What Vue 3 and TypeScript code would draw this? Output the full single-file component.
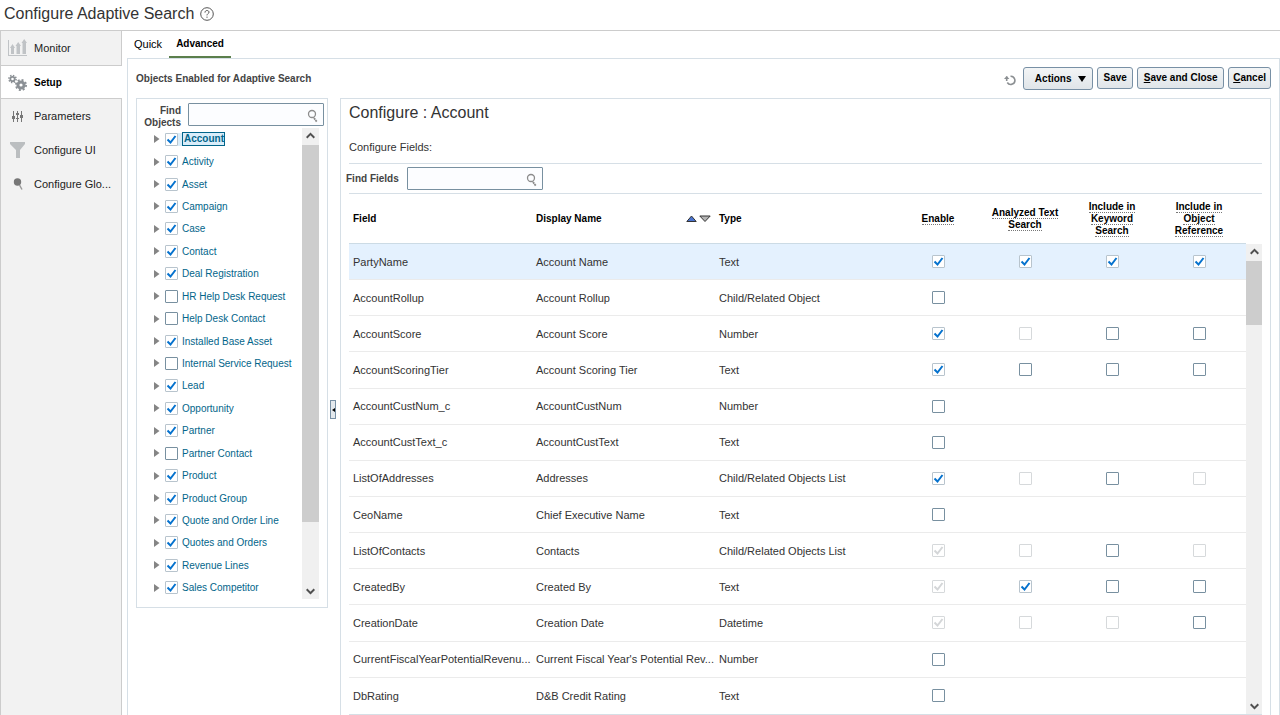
<script setup lang="ts">
type Mark = 'on' | 'off' | 'dis' | 'dison' | ''

interface Row {
  field: string
  display: string
  type: string
  marks: Mark[]
}

const nav = ['Monitor', 'Setup', 'Parameters', 'Configure UI', 'Configure Glo...']

const unchecked = ['HR Help Desk Request', 'Help Desk Contact', 'Internal Service Request', 'Partner Contact']
const objects = [
  'Account', 'Activity', 'Asset', 'Campaign', 'Case', 'Contact', 'Deal Registration',
  'HR Help Desk Request', 'Help Desk Contact', 'Installed Base Asset', 'Internal Service Request',
  'Lead', 'Opportunity', 'Partner', 'Partner Contact', 'Product', 'Product Group',
  'Quote and Order Line', 'Quotes and Orders', 'Revenue Lines', 'Sales Competitor',
].map((name) => ({ name, checked: !unchecked.includes(name) }))

const markHeads = [
  { name: 'Enable', lines: ['Enable'] },
  { name: 'Analyzed Text Search', lines: ['Analyzed Text', 'Search'] },
  { name: 'Include in Keyword Search', lines: ['Include in', 'Keyword', 'Search'] },
  { name: 'Include in Object Reference', lines: ['Include in', 'Object', 'Reference'] },
]

const rows: Row[] = [
  { field: 'PartyName', display: 'Account Name', type: 'Text', marks: ['on', 'on', 'on', 'on'] },
  { field: 'AccountRollup', display: 'Account Rollup', type: 'Child/Related Object', marks: ['off', '', '', ''] },
  { field: 'AccountScore', display: 'Account Score', type: 'Number', marks: ['on', 'dis', 'off', 'off'] },
  { field: 'AccountScoringTier', display: 'Account Scoring Tier', type: 'Text', marks: ['on', 'off', 'off', 'off'] },
  { field: 'AccountCustNum_c', display: 'AccountCustNum', type: 'Number', marks: ['off', '', '', ''] },
  { field: 'AccountCustText_c', display: 'AccountCustText', type: 'Text', marks: ['off', '', '', ''] },
  { field: 'ListOfAddresses', display: 'Addresses', type: 'Child/Related Objects List', marks: ['on', 'dis', 'off', 'dis'] },
  { field: 'CeoName', display: 'Chief Executive Name', type: 'Text', marks: ['off', '', '', ''] },
  { field: 'ListOfContacts', display: 'Contacts', type: 'Child/Related Objects List', marks: ['dison', 'dis', 'off', 'dis'] },
  { field: 'CreatedBy', display: 'Created By', type: 'Text', marks: ['dison', 'on', 'off', 'off'] },
  { field: 'CreationDate', display: 'Creation Date', type: 'Datetime', marks: ['dison', 'dis', 'dis', 'off'] },
  { field: 'CurrentFiscalYearPotentialRevenu...', display: "Current Fiscal Year's Potential Rev...", type: 'Number', marks: ['off', '', '', ''] },
  { field: 'DbRating', display: 'D&B Credit Rating', type: 'Text', marks: ['off', '', '', ''] },
]
</script>

<template>
  <div class="page">
    <header class="top">
      <h1>Configure Adaptive Search</h1>
      <button class="bare" aria-label="Help">
        <svg width="14" height="14" viewBox="0 0 14 14" fill="none" stroke="#555">
          <circle cx="7" cy="7" r="6.3" />
          <path d="M5 5.6C5 4.2 5.900 3.500 7 3.500S9 4.200 9 5.200C9 6.500 7 6.600 7 8.400M7 9.600v1.200" />
        </svg>
      </button>
    </header>
    <div class="body">
      <nav class="side">
        <a v-for="(item, i) in nav" :key="item" href="#" :class="{ current: i === 1 }">
          <svg width="20" height="18" viewBox="0 0 20 18">
            <g v-if="i === 0" fill="#c0c3c6">
              <path d="M0 1h1v15h18v1H0z" />
              <path d="M3 15V9H2l2.500-4L7 9H6v6zM8.500 15V7H7.500l2.700-4L13 7h-1v8zM14.500 15V4h-1l2.700-4L19 4h-1v11z" />
            </g>
            <g v-else-if="i === 1" fill="none" stroke="#8b9095">
              <circle cx="4.500" cy="5" r="2.200" stroke-width="1.800" />
              <circle cx="4.500" cy="5" r="3.600" stroke-width="1.500" stroke-dasharray="1.410 1.410" />
              <circle cx="13" cy="11" r="3.100" stroke-width="3" />
              <circle cx="13" cy="11" r="5.100" stroke-width="1.800" stroke-dasharray="2 2" />
            </g>
            <g v-else-if="i === 2" fill="#777">
              <path d="M5 4h1v11H5zM9 4h1v11H9zM13 4h1v11h-1z" />
              <path d="M4 9h3v3H4zM8 6h3v2H8zM8 11h3v1H8zM12 8h3v3h-3z" />
            </g>
            <path v-else-if="i === 3" d="M2 1h15v2l-5 6v8H8V9L2 3z" fill="#bbbec0" />
            <g v-else>
              <circle cx="9.500" cy="7" r="3.700" fill="#777" />
              <path d="M11.500 10l2.500 4.500" stroke="#999" stroke-width="1.500" />
            </g>
          </svg>
          <span>{{ item }}</span>
        </a>
      </nav>
      <main>
        <div class="tabs">
          <a href="#">Quick</a>
          <a href="#" class="active">Advanced</a>
        </div>
        <section class="panel">
          <div class="bar">
            <h2>Objects Enabled for Adaptive Search</h2>
            <button class="bare refresh" aria-label="Refresh">
              <svg width="14" height="12" viewBox="0 0 14 12" fill="none" stroke="#8b8f92" stroke-width="1.600">
                <path d="M7.500 2.200A4.100 4.100 0 1 1 4.300 8.500M3.700 7V2.500" />
                <path d="M1 5l2.700-3L6.400 5z" fill="#8b8f92" stroke="none" />
              </svg>
            </button>
            <button class="btn menu">Actions
              <svg width="8" height="6" viewBox="0 0 8 6"><path d="M0 0h8L4 6z" /></svg>
            </button>
            <button class="btn save">Save</button>
            <button class="btn close"><span><u>S</u>ave and Close</span></button>
            <button class="btn"><span><u>C</u>ancel</span></button>
          </div>
          <div class="split">
            <section class="objects">
              <div class="find">
                <label for="find-objects">Find Objects</label>
                <div class="search">
                  <input id="find-objects" type="text">
                  <svg width="12" height="14" viewBox="0 0 12 14" fill="none" stroke="#8c8c8c">
                    <circle cx="5" cy="5" r="3.500" stroke-width="1.300" />
                    <path d="M7 9l3 4" stroke-width="1.800" stroke-dasharray="2 .5" />
                  </svg>
                </div>
              </div>
              <div class="scroller">
                <ul>
                  <li v-for="(o, i) in objects" :key="o.name" :class="{ selected: i === 0 }">
                    <button class="bare" :aria-label="'Expand ' + o.name">
                      <svg width="6" height="8" viewBox="0 0 6 8"><path d="M0 0l5.500 4L0 8z" fill="#858585" /></svg>
                    </button>
                    <span class="node">
                      <input type="checkbox" :checked="o.checked" :aria-label="o.name">
                      <a href="#">{{ o.name }}</a>
                    </span>
                  </li>
                </ul>
                <div class="scrollbar">
                  <svg width="9" height="7" viewBox="0 0 9 7"><path d="M.7 5.700L4.500 1.900l3.800 3.800" /></svg>
                  <div class="thumb tree-thumb"></div>
                  <svg width="9" height="7" viewBox="0 0 9 7"><path d="M.7 1.300L4.500 5.100l3.800-3.800" /></svg>
                </div>
              </div>
            </section>
            <div class="divider">
              <button aria-label="Collapse pane">
                <svg width="3" height="4" viewBox="0 0 3 4"><path d="M3 0v4L0 2z" /></svg>
              </button>
            </div>
            <section class="config">
              <h3>Configure : Account</h3>
              <p>Configure Fields:</p>
              <div class="filter">
                <label for="find-fields">Find Fields</label>
                <div class="search">
                  <input id="find-fields" type="text">
                  <svg width="12" height="14" viewBox="0 0 12 14" fill="none" stroke="#8c8c8c">
                    <circle cx="5" cy="5" r="3.500" stroke-width="1.300" />
                    <path d="M7 9l3 4" stroke-width="1.800" stroke-dasharray="2 .5" />
                  </svg>
                </div>
              </div>
              <div class="grid">
                <table>
                  <colgroup>
                    <col class="c-text"><col class="c-text"><col>
                    <col v-for="h in markHeads" :key="h.name" class="c-mark">
                  </colgroup>
                  <thead>
                    <tr>
                      <th>Field</th>
                      <th>
                        <div class="sorted">Display Name
                          <svg width="25" height="8" viewBox="0 0 25 8" stroke="#333" stroke-linejoin="round">
                            <path d="M.8 6.500L5.500 1l4.700 5.500z" fill="#4a74d0" />
                            <path d="M13.800 1h10.400L19 6.500z" fill="#b5b5b5" />
                          </svg>
                        </div>
                      </th>
                      <th>Type</th>
                      <th v-for="h in markHeads" :key="h.name" class="mark">
                        <span v-for="l in h.lines" :key="l"><abbr>{{ l }}</abbr></span>
                      </th>
                    </tr>
                  </thead>
                  <tbody>
                    <tr v-for="(r, i) in rows" :key="r.field" :class="{ picked: i === 0 }">
                      <td>{{ r.field }}</td>
                      <td>{{ r.display }}</td>
                      <td>{{ r.type }}</td>
                      <td v-for="(m, j) in r.marks" :key="j" class="mark">
                        <input
                          v-if="m"
                          type="checkbox"
                          :checked="m === 'on' || m === 'dison'"
                          :disabled="m === 'dis' || m === 'dison'"
                          :aria-label="markHeads[j].name + ' ' + r.field"
                        >
                      </td>
                    </tr>
                  </tbody>
                </table>
                <div class="scrollbar">
                  <svg width="9" height="7" viewBox="0 0 9 7"><path d="M.7 5.700L4.500 1.900l3.800 3.800" /></svg>
                  <div class="thumb"></div>
                  <svg width="9" height="7" viewBox="0 0 9 7"><path d="M.7 1.300L4.500 5.100l3.800-3.800" /></svg>
                </div>
              </div>
            </section>
          </div>
        </section>
      </main>
    </div>
  </div>
</template>

<style>
body {
  margin: 0;
  background: #fff;
}
</style>

<style scoped>
* {
  box-sizing: border-box;
}
.page {
  min-height: 100vh;
  display: flex;
  flex-direction: column;
  font: 10px/12px "Liberation Sans", Arial, sans-serif;
  color: #333;
}
h1, h2, h3, p, ul {
  margin: 0;
  padding: 0;
  list-style: none;
}
svg {
  display: block;
  flex: none;
}
a {
  color: inherit;
  text-decoration: none;
}
button, input {
  font: inherit;
  color: inherit;
  margin: 0;
  padding: 0;
}
.bare {
  border: 0;
  background: none;
}
.top {
  display: flex;
  align-items: center;
  gap: 6px;
  height: 31px;
  padding: 0 4px 3px;
  border-bottom: 1px solid #ccc;
}
h1, h3 {
  font-size: 16px;
  line-height: 20px;
  font-weight: normal;
}
.body {
  flex: 1;
  display: flex;
}
.side {
  width: 122px;
  flex: none;
  background: #f2f2f2;
  border-right: 1px solid #ccc;
  border-left: 1px solid #ccc;
}
.side a {
  display: flex;
  align-items: center;
  gap: 6px;
  height: 34px;
  padding-left: 7px;
  font-size: 11px;
  color: #222;
  white-space: nowrap;
}
.side .current {
  margin-right: -1px;
  padding-top: 2px;
  background: #fff;
  border-top: 1px solid #ccc;
  border-bottom: 1px solid #ccc;
  font-weight: bold;
  font-size: 10px;
  color: #000;
}
main {
  flex: 1;
  min-width: 0;
  display: flex;
  flex-direction: column;
  padding-left: 5px;
}
.tabs {
  display: flex;
  height: 27px;
  color: #000;
}
.tabs a {
  padding: 7px 7px 0;
  font-size: 11px;
}
.tabs .active {
  font-size: 10px;
  font-weight: bold;
  border-bottom: 2px solid #5b7f4c;
}
.panel {
  flex: 1;
  display: flex;
  flex-direction: column;
  border: 1px solid #d6dfe6;
  border-bottom: 0;
  padding: 8px 8px 0;
}
.bar {
  display: flex;
  align-items: flex-start;
  gap: 4px;
  height: 31px;
}
h2 {
  flex: 1;
  font-size: 10px;
  line-height: 24px;
  color: #444;
}
.refresh {
  padding: 7px 0 0;
  margin-right: 2px;
}
.btn {
  display: flex;
  align-items: center;
  justify-content: center;
  height: 22px;
  padding: 0 4px;
  font-weight: bold;
  white-space: nowrap;
  color: #000;
  border: 1px solid #7890a5;
  border-radius: 3px;
  background: linear-gradient(#f3f5f6, #e0e5e9);
}
.menu {
  width: 70px;
  height: 23px;
  gap: 6px;
  padding-left: 8px;
}
.save {
  min-width: 36px;
}
.close {
  min-width: 87px;
}
.split {
  flex: 1;
  display: flex;
  align-items: stretch;
}
.objects {
  width: 192px;
  flex: none;
  align-self: flex-start;
  border: 1px solid #d6dfe6;
  padding: 4px 3px 8px 4px;
}
.find {
  display: flex;
  align-items: flex-start;
  gap: 7px;
  height: 25px;
}
.find label {
  width: 40px;
  padding-top: 2px;
  text-align: right;
  font-weight: bold;
  color: #444;
}
.search {
  position: relative;
  width: 136px;
}
.search input {
  display: block;
  width: 100%;
  height: 23px;
  padding: 0 20px 0 4px;
  border: 1px solid #7890a0;
  border-radius: 1px;
  background: #fcfdff;
}
.search svg {
  position: absolute;
  right: 5px;
  top: 6px;
}
.scroller {
  display: flex;
  justify-content: space-between;
  min-height: 471px;
  padding-right: 5px;
}
ul {
  display: grid;
  grid-auto-rows: 1fr;
  padding-left: 13px;
}
li {
  display: flex;
  align-items: center;
  gap: 5px;
  color: #02658a;
  white-space: nowrap;
}
li .node {
  display: flex;
  align-items: center;
  gap: 4px;
}
li a {
  padding-top: 1px;
}
li .bare {
  width: 6px;
}
.selected a {
  padding: 0 0 0 1px;
  font-weight: bold;
  outline: 1px solid #02658a;
}
.selected .node {
  gap: 5px;
  background: #d9edfa;
}
input[type="checkbox"] {
  appearance: none;
  display: block;
  flex: none;
  width: 13px;
  height: 13px;
  border: 1px solid #7890a0;
  border-radius: 1px;
  background: #fff;
}
input[type="checkbox"]:checked {
  border-color: #b8c4cd;
  background: #fff url("data:image/svg+xml,%3Csvg xmlns='http://www.w3.org/2000/svg' viewBox='0 0 11 11'%3E%3Cpath d='M1.500 5.500l3 3 5-6.500' fill='none' stroke='%230572ce' stroke-width='2'/%3E%3C/svg%3E") center / 11px 11px no-repeat;
}
input[type="checkbox"]:disabled {
  border-color: #d6d9db;
}
input[type="checkbox"]:disabled:checked {
  background-image: url("data:image/svg+xml,%3Csvg xmlns='http://www.w3.org/2000/svg' viewBox='0 0 11 11'%3E%3Cpath d='M1.500 5.500l3 3 5-6.500' fill='none' stroke='%23d4d6d8' stroke-width='2'/%3E%3C/svg%3E");
}
.scrollbar {
  display: flex;
  flex-direction: column;
  align-items: center;
  width: 17px;
  flex: none;
  padding: 4px 0;
  background: #f0f0f0;
}
.scrollbar svg {
  fill: none;
  stroke: #505050;
  stroke-width: 2;
}
.scrollbar svg:last-child {
  margin-top: auto;
}
.thumb {
  width: 100%;
  height: 64px;
  margin-top: 6px;
  background: #cdcdcd;
}
.tree-thumb {
  height: 377px;
}
.divider {
  width: 12px;
  flex: none;
  padding: 302px 0 0 2px;
}
.divider button {
  display: flex;
  align-items: center;
  justify-content: center;
  width: 6px;
  height: 19px;
  border: 1px solid #7890a5;
  background: #e4e9ed;
}
.config {
  flex: 1;
  min-width: 0;
  display: flex;
  flex-direction: column;
  border: 1px solid #d6dfe6;
  border-bottom: 0;
  padding: 4px 8px 0;
}
.config p {
  margin: 18px 0 10px;
  font-size: 11px;
}
.filter {
  display: flex;
  gap: 8px;
  height: 31px;
  padding-top: 3px;
  border: solid #d6dfe6;
  border-width: 1px 0;
}
.filter label {
  margin-left: -3px;
  line-height: 23px;
  font-weight: bold;
  color: #444;
}
.grid {
  flex: 1;
  display: flex;
  border-bottom: 1px solid #d6dfe6;
}
table {
  flex: 1;
  width: 100%;
  min-width: 0;
  table-layout: fixed;
  border-collapse: separate;
  border-spacing: 0;
}
.c-text {
  width: 183px;
}
.c-mark {
  width: 87px;
}
th, td {
  padding: 0 4px;
  text-align: left;
  white-space: nowrap;
}
thead th {
  height: 50px;
  border-bottom: 1px solid #ccdbe5;
  color: #000;
}
.sorted {
  display: flex;
  align-items: center;
  justify-content: space-between;
}
th span {
  display: block;
}
abbr {
  border-bottom: 1px dotted #777;
}
td {
  height: 36px;
  border-bottom: 1px solid #ebebeb;
  font-size: 11px;
}
tbody tr:last-child td {
  border-bottom: 0;
}
.picked td {
  background: #e4f1fe;
}
th.mark, td.mark {
  padding: 0 7px 0 0;
  text-align: center;
}
td.mark input {
  margin: 0 auto;
}
.grid .scrollbar {
  width: 16px;
  margin-top: 50px;
}
</style>
